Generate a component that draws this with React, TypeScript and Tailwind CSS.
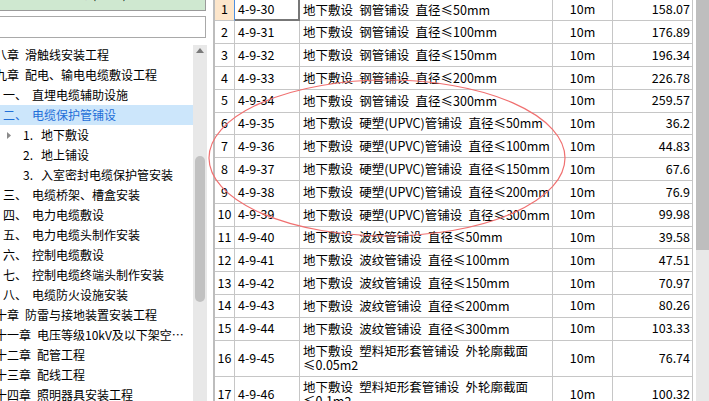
import React from "react";

const FONT = { fontFamily: '"Noto Sans CJK SC", "Noto Sans", sans-serif' };

type Row = { n: number; code: string; name: React.ReactNode; unit: string; val: string; tall?: boolean };

const S = "\u2002";
const rows: Row[] = [
  { n: 1, code: "4-9-30", name: `地下敷设${S}钢管铺设${S}直径≤50mm`, unit: "10m", val: "158.07" },
  { n: 2, code: "4-9-31", name: `地下敷设${S}钢管铺设${S}直径≤100mm`, unit: "10m", val: "176.89" },
  { n: 3, code: "4-9-32", name: `地下敷设${S}钢管铺设${S}直径≤150mm`, unit: "10m", val: "196.34" },
  { n: 4, code: "4-9-33", name: `地下敷设${S}钢管铺设${S}直径≤200mm`, unit: "10m", val: "226.78" },
  { n: 5, code: "4-9-34", name: `地下敷设${S}钢管铺设${S}直径≤300mm`, unit: "10m", val: "259.57" },
  { n: 6, code: "4-9-35", name: `地下敷设${S}硬塑(UPVC)管铺设${S}直径≤50mm`, unit: "10m", val: "36.2" },
  { n: 7, code: "4-9-36", name: `地下敷设${S}硬塑(UPVC)管铺设${S}直径≤100mm`, unit: "10m", val: "44.83" },
  { n: 8, code: "4-9-37", name: `地下敷设${S}硬塑(UPVC)管铺设${S}直径≤150mm`, unit: "10m", val: "67.6" },
  { n: 9, code: "4-9-38", name: `地下敷设${S}硬塑(UPVC)管铺设${S}直径≤200mm`, unit: "10m", val: "76.9" },
  { n: 10, code: "4-9-39", name: `地下敷设${S}硬塑(UPVC)管铺设${S}直径≤300mm`, unit: "10m", val: "99.98" },
  { n: 11, code: "4-9-40", name: `地下敷设${S}波纹管铺设${S}直径≤50mm`, unit: "10m", val: "39.58" },
  { n: 12, code: "4-9-41", name: `地下敷设${S}波纹管铺设${S}直径≤100mm`, unit: "10m", val: "47.51" },
  { n: 13, code: "4-9-42", name: `地下敷设${S}波纹管铺设${S}直径≤150mm`, unit: "10m", val: "70.97" },
  { n: 14, code: "4-9-43", name: `地下敷设${S}波纹管铺设${S}直径≤200mm`, unit: "10m", val: "80.26" },
  { n: 15, code: "4-9-44", name: `地下敷设${S}波纹管铺设${S}直径≤300mm`, unit: "10m", val: "103.33" },
  {
    n: 16,
    code: "4-9-45",
    name: (
      <>
        {`地下敷设${S}塑料矩形套管铺设${S}外轮廓截面`}
        <br />≤0.05m2
      </>
    ),
    unit: "10m",
    val: "76.74",
    tall: true,
  },
  {
    n: 17,
    code: "4-9-46",
    name: (
      <>
        {`地下敷设${S}塑料矩形套管铺设${S}外轮廓截面`}
        <br />≤0.1m2
      </>
    ),
    unit: "10m",
    val: "100.32",
    tall: true,
  },
];

type TreeItem = { kind: "ch" | "l2" | "l3"; num: string; title: string; sel?: boolean; arrow?: boolean };
const tree: TreeItem[] = [
  { kind: "ch", num: "第八章", title: "滑触线安装工程" },
  { kind: "ch", num: "第九章", title: "配电、输电电缆敷设工程" },
  { kind: "l2", num: "一、", title: "直埋电缆辅助设施" },
  { kind: "l2", num: "二、", title: "电缆保护管铺设", sel: true },
  { kind: "l3", num: "1.", title: "地下敷设", arrow: true },
  { kind: "l3", num: "2.", title: "地上铺设" },
  { kind: "l3", num: "3.", title: "入室密封电缆保护管安装" },
  { kind: "l2", num: "三、", title: "电缆桥架、槽盒安装" },
  { kind: "l2", num: "四、", title: "电力电缆敷设" },
  { kind: "l2", num: "五、", title: "电力电缆头制作安装" },
  { kind: "l2", num: "六、", title: "控制电缆敷设" },
  { kind: "l2", num: "七、", title: "控制电缆终端头制作安装" },
  { kind: "l2", num: "八、", title: "电缆防火设施安装" },
  { kind: "ch", num: "第十章", title: "防雷与接地装置安装工程" },
  { kind: "ch", num: "第十一章", title: "电压等级10kV及以下架空…" },
  { kind: "ch", num: "第十二章", title: "配管工程" },
  { kind: "ch", num: "第十三章", title: "配线工程" },
  { kind: "ch", num: "第十四章", title: "照明器具安装工程" },
];

function TreeRow({ it }: { it: TreeItem }) {
  const base = "h-[20px] flex items-center whitespace-nowrap text-[12px] leading-[20px]";
  if (it.kind === "ch") {
    return (
      <div className={`${base} text-black`}>
        <span className="ml-[-17px]">{it.num}</span>
        <span className="ml-[6px]">{it.title}</span>
      </div>
    );
  }
  if (it.kind === "l2") {
    return (
      <div className={`${base} ${it.sel ? "bg-[#cce6fb] text-[#1f6fd8]" : "text-black"}`}>
        <span className="ml-[3px] w-[29px]">{it.num}</span>
        <span>{it.title}</span>
      </div>
    );
  }
  return (
    <div className={`${base} text-black`}>
      <span className="ml-[7px] w-[16px] flex items-center">
        {it.arrow && (
          <svg width="4" height="7" viewBox="0 0 4 7">
            <path d="M0 0 L4 3.5 L0 7 Z" fill="#8a8a8a" />
          </svg>
        )}
      </span>
      <span className="w-[18px]">{it.num}</span>
      <span>{it.title}</span>
    </div>
  );
}

export default function App() {
  return (
    <div className="relative w-[709px] h-[401px] overflow-hidden bg-white flex" style={FONT}>
      {/* Left panel */}
      <div className="w-[207px] h-full flex flex-col">
        <div className="w-[206px] h-[11px] shrink-0 bg-[#cfe8d0] border-b border-r border-[#9a9a9a] overflow-hidden">
          <div className="mt-[-14px] ml-[-4px] text-[12px] leading-[16px] whitespace-nowrap text-black">
            安装工程预算定额(2013)
          </div>
        </div>
        <div className="h-[5px] shrink-0" />
        <div className="w-[206px] h-[22px] shrink-0 border border-l-0 border-[#a9a9a9] bg-white" />
        <div className="h-[7px] shrink-0" />
        <div className="flex-1 flex min-h-0">
          <div className="w-[193px] overflow-hidden">
            {tree.map((it, i) => (
              <TreeRow key={i} it={it} />
            ))}
          </div>
          <div className="w-[14px] bg-[#e8e8e8] flex flex-col items-center">
            <svg className="mt-[3px]" width="8" height="5" viewBox="0 0 8 5">
              <path d="M0 5 L4 0 L8 5 Z" fill="#7a7a7a" />
            </svg>
            <div className="mt-[103px] w-[10px] h-[146px] rounded-full bg-[#c1c1c1]" />
          </div>
        </div>
      </div>

      <div className="w-[6px] shrink-0" />

      {/* Table */}
      <div className="h-full border-l-2 border-[#bdbdbd] shrink-0">
        <div className="mt-[-1.4px] text-[12.5px] text-black">
          {rows.map((r) => {
            const sel = r.n === 1;
            return (
              <div
                key={r.n}
                className={`grid grid-cols-[20px_65px_253px_60px_80px] ${r.tall ? "h-[36px]" : "h-[22.8px]"}`}
              >
                <div
                  className={`flex items-center justify-center border-b border-r border-b-[#c6c6c6] ${
                    sel ? "bg-[#fde6cb] border-r-[#4d8fe0]" : "border-r-[#c6c6c6]"
                  }`}
                >
                  {r.n}
                </div>
                <div
                  className={`flex items-center pl-[3px] whitespace-nowrap ${
                    sel ? "border-r-2 border-b-2 border-[#777777]" : "border-b border-r border-[#c6c6c6]"
                  }`}
                >
                  {r.code}
                </div>
                <div className="flex items-center pl-[3px] border-b border-r border-[#c6c6c6] whitespace-nowrap leading-[14px]">
                  <div>{r.name}</div>
                </div>
                <div className="flex items-center justify-center border-b border-r border-[#c6c6c6]">{r.unit}</div>
                <div className="flex items-center justify-end pr-[2px] border-b border-r border-[#c6c6c6]">{r.val}</div>
              </div>
            );
          })}
        </div>
      </div>

      <div className="w-[3px] shrink-0" />
      <div className="w-[13px] h-full bg-[#e8e8e8] flex flex-col">
        <div className="h-[250px] bg-[#bebebe]" />
      </div>

      <svg className="absolute inset-0 pointer-events-none" width="709" height="401">
        <ellipse cx="387" cy="158" rx="178" ry="78" fill="none" stroke="#f07070" strokeWidth="1.2" />
      </svg>
    </div>
  );
}
